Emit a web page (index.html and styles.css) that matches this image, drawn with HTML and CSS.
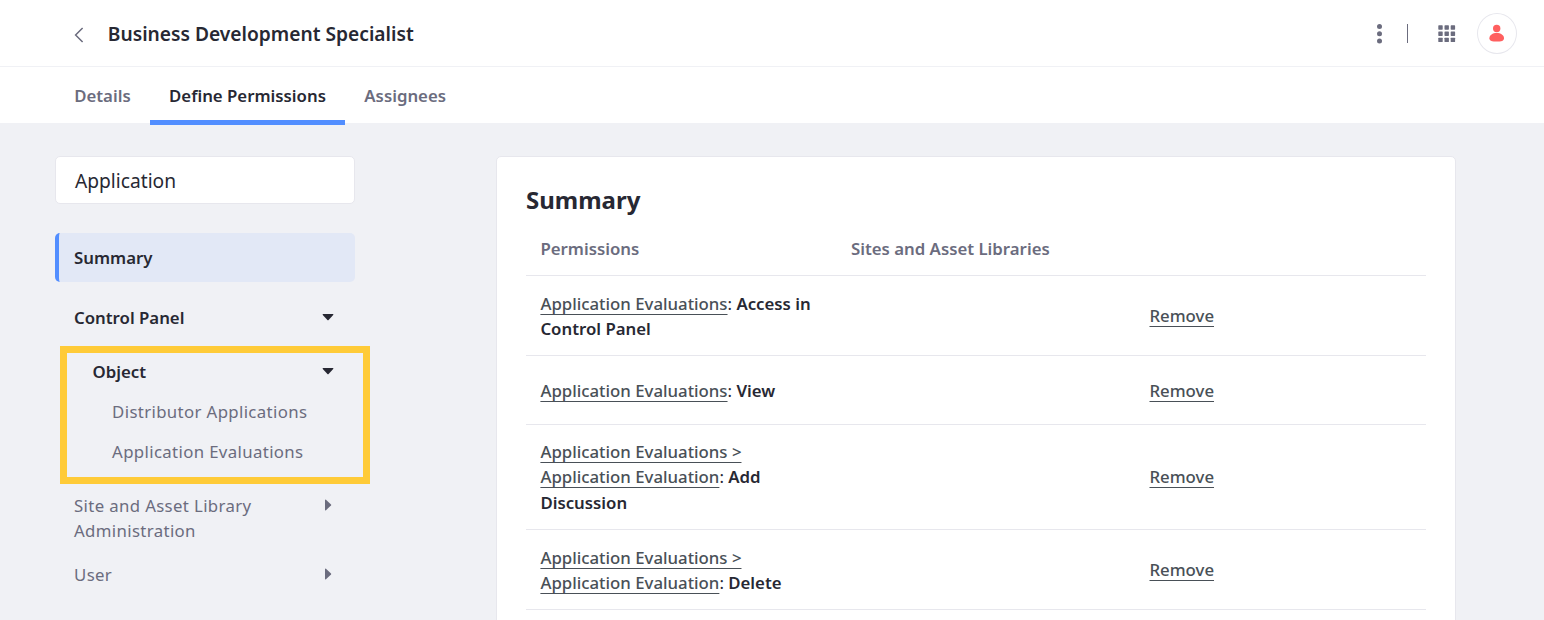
FILE: index.html
```html
<!DOCTYPE html>
<html lang="en">
<head>
<meta charset="utf-8">
<title>Business Development Specialist</title>
<link rel="stylesheet" href="styles.css">
</head>
<body>
<header class="topbar">
  <svg class="back" width="12" height="18" viewBox="0 0 12 18"><path d="M9.6 2 2.6 9l7 7" fill="none" stroke="#6b6c7e" stroke-width="1.5"/></svg>
  <h1 class="title">Business Development Specialist</h1>
  <div class="tools">
    <svg class="dots" width="6" height="20" viewBox="0 0 6 20" fill="#6b6c7e"><circle cx="3.5" cy="2.6" r="2.5"/><circle cx="3.5" cy="9.8" r="2.5"/><circle cx="3.5" cy="17" r="2.5"/></svg>
    <span class="divider"></span>
    <svg class="grid" width="18" height="18" viewBox="0 0 18 18" fill="#6b6c7e"><rect x="0.3" y="0.3" width="4.4" height="4.4" rx=".6"/><rect x="6.5" y="0.3" width="4.4" height="4.4" rx=".6"/><rect x="12.7" y="0.3" width="4.4" height="4.4" rx=".6"/><rect x="0.3" y="6.5" width="4.4" height="4.4" rx=".6"/><rect x="6.5" y="6.5" width="4.4" height="4.4" rx=".6"/><rect x="12.7" y="6.5" width="4.4" height="4.4" rx=".6"/><rect x="0.3" y="12.7" width="4.4" height="4.4" rx=".6"/><rect x="6.5" y="12.7" width="4.4" height="4.4" rx=".6"/><rect x="12.7" y="12.7" width="4.4" height="4.4" rx=".6"/></svg>
    <span class="avatar"><svg width="16" height="18" viewBox="0 0 16 18" fill="#ff5f5f"><circle cx="7.700" cy="4.500" r="3.700"/><path d="M7.700 9c4 0 7.300 2 7.300 5.200 0 2.200-2.200 3.200-4.400 3.200H4.800C2.600 17.400.4 16.400.4 14.200.4 11 3.700 9 7.700 9z"/></svg></span>
  </div>
</header>
<nav class="tabs">
  <a class="tab">Details</a>
  <a class="tab active">Define Permissions</a>
  <a class="tab">Assignees</a>
</nav>
<main class="content">
  <aside class="sidebar">
    <div class="search">Application</div>
    <div class="nav-item selected">Summary</div>
    <div class="nav-item strong panel">Control Panel<svg class="caret" width="12" height="12" viewBox="0 0 12 12"><path d="M1 3h10q.8.3.2 1L6.600 9q-.6.500-1.200 0L.8 4Q.2 3.300 1 3z" fill="#272833"/></svg></div>
    <div class="highlight">
      <div class="nav-item strong object">Object<svg class="caret" width="12" height="12" viewBox="0 0 12 12"><path d="M1 3h10q.8.3.2 1L6.600 9q-.6.500-1.200 0L.8 4Q.2 3.300 1 3z" fill="#272833"/></svg></div>
      <div class="nav-item leaf">Distributor Applications</div>
      <div class="nav-item leaf">Application Evaluations</div>
    </div>
    <div class="nav-item site">Site and Asset Library<br>Administration<svg class="caret" width="12" height="12" viewBox="0 0 12 12"><path d="M3 1v10q.3.8 1 .2L9 6.600q.500-.6 0-1.200L4 .8Q3.300.2 3 1z" fill="#6b6c7e"/></svg></div>
    <div class="nav-item user">User<svg class="caret" width="12" height="12" viewBox="0 0 12 12"><path d="M3 1v10q.3.8 1 .2L9 6.600q.500-.6 0-1.200L4 .8Q3.300.2 3 1z" fill="#6b6c7e"/></svg></div>
  </aside>
  <section class="card">
    <h2 class="heading">Summary</h2>
    <div class="row head"><div class="perm">Permissions</div><div class="sites">Sites and Asset Libraries</div></div>
    <div class="row two"><div class="perm"><a>Application Evaluations</a>: <b>Access in<br>Control Panel</b></div><div class="sites"></div><div class="action"><a>Remove</a></div></div>
    <div class="row one"><div class="perm"><a>Application Evaluations</a>: <b>View</b></div><div class="sites"></div><div class="action"><a>Remove</a></div></div>
    <div class="row three"><div class="perm"><a>Application Evaluations &gt;<br>Application Evaluation</a>: <b>Add<br>Discussion</b></div><div class="sites"></div><div class="action"><a>Remove</a></div></div>
    <div class="row two"><div class="perm"><a>Application Evaluations &gt;<br>Application Evaluation</a>: <b>Delete</b></div><div class="sites"></div><div class="action"><a>Remove</a></div></div>
  </section>
</main>
</body>
</html>
```
FILE: styles.css
```css
* { box-sizing: border-box; }
body {
  margin: 0;
  height: 620px;
  overflow: hidden;
  display: flex;
  flex-direction: column;
  background: #f0f1f5;
  color: #272833;
  font: 16.8px/25.2px "Noto Sans", sans-serif;
}
.topbar {
  display: flex;
  align-items: center;
  flex: 0 0 67px;
  padding: 0 27px 0 72.5px;
  background: #fff;
  border-bottom: 1px solid #f0f1f5;
}
.back { margin-top: 3px; }
.title { margin: 2px 0 0 23.3px; font-size: 19.2px; line-height: 28px; font-weight: 600; }
.tools { display: flex; align-items: center; margin-left: auto; }
.divider { width: 1px; height: 19px; margin: 0 30px 0 25px; background: #6b6c7e; }
.dots, .grid { margin-top: 1px; }
.avatar {
  display: flex;
  align-items: center;
  justify-content: center;
  width: 40px;
  height: 41px;
  margin-left: 21px;
  border: 1px solid #e7e7ed;
  border-radius: 50%;
}
.tabs { display: flex; flex: none; height: 56px; padding-left: 55px; background: #fff; }
.tab { height: 58px; padding: 16px 19.2px 0; color: #6b6c7e; font-weight: 600; }
.tab.active { color: #272833; border-bottom: 5px solid #528eff; }
.content { display: flex; flex: 1; align-items: flex-start; padding: 33px 88px 0 55px; }
.sidebar { flex: none; width: 300px; margin-right: 141px; }
.search {
  height: 48px;
  padding: 10px 19px;
  border: 1px solid #e7e7ed;
  border-radius: 5px;
  background: #fff;
  font-size: 19.2px;
  line-height: 28px;
}
.nav-item { position: relative; padding: 0 19px; color: #6b6c7e; letter-spacing: .36px; }
.selected {
  height: 49px;
  margin-top: 29px;
  padding: 12px 15px;
  border-left: 4px solid #528eff;
  border-radius: 5px;
  background: #e2e8f6;
  color: #272833;
  font-weight: 600;
  letter-spacing: 0;
}
.strong { color: #272833; font-weight: 600; letter-spacing: 0; }
.caret { position: absolute; right: 21px; top: 6px; }
.panel { margin-top: 23px; }
.highlight {
  width: 310px;
  height: 138px;
  margin: 16px 0 0 4.6px;
  padding-top: 6px;
  border: 7px solid #ffcb38;
}
.object { padding-left: 26px; }
.object .caret { right: 29px; }
.leaf { margin-top: 14.7px; padding-left: 45.5px; white-space: nowrap; }
.site { margin-top: 9px; }
.user { margin-top: 18px; }
.card {
  flex: none;
  width: 960px;
  height: 480px;
  padding: 27px 29px;
  border: 1px solid #e7e7ed;
  border-radius: 5px;
  background: #fff;
}
.heading { margin: 0 0 1px; font-size: 24px; line-height: 32px; font-weight: 700; }
.row { display: flex; align-items: center; border-bottom: 1px solid #e7e7ed; }
.head { height: 59px; padding-top: 5px; color: #6b6c7e; font-weight: 600; }
.one { height: 69px; padding-top: 1px; }
.two { height: 80px; }
.two .perm { padding-top: 1px; }
.three { height: 105px; }
.perm { flex: none; width: 310.6px; padding: 0 14.4px; white-space: nowrap; }
.sites { flex: none; width: 298.5px; padding-left: 14.4px; }
.action { padding-left: 14.4px; }
.row a {
  color: #495057;
  font-weight: 500;
  text-decoration: underline;
  text-underline-offset: 4px;
  text-decoration-thickness: 1px;
}
.row b { font-weight: 600; }
```
